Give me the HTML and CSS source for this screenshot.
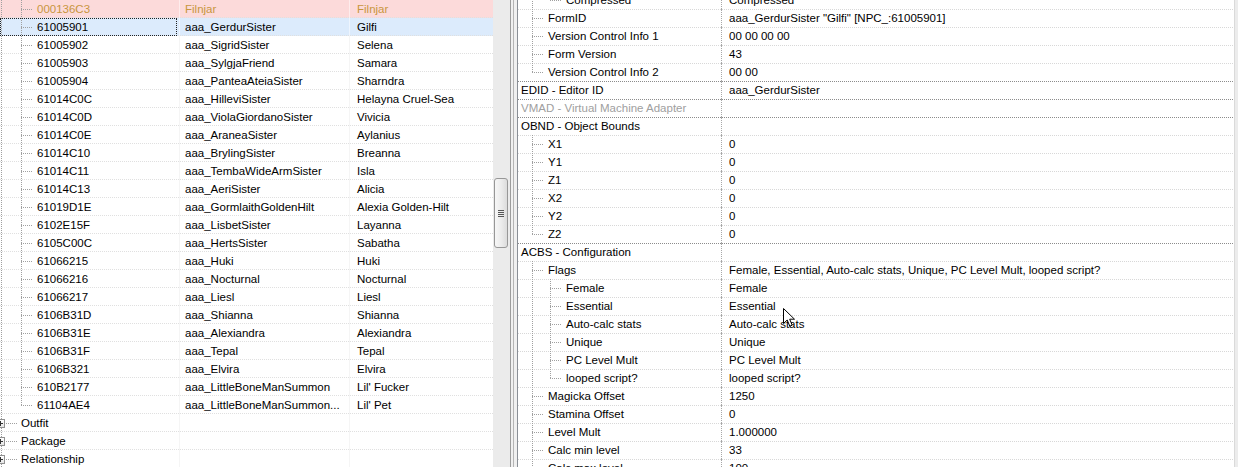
FILE: index.html
```html
<!DOCTYPE html>
<html>
  <head>
    <meta charset="UTF-8" />
    <title>Record View</title>
    <link rel="stylesheet" href="styles.css">
  </head>
  <body>
    <div class="window">
      <div class="left">
        <div class="lrow top"><div class="c1"><span class="l-root"></span><span class="l-br"></span>000136C3</div><div class="c2">Filnjar</div><div class="c3">Filnjar</div></div>
        <div class="lrow sel"><div class="c1"><span class="l-root"></span><span class="l-br"></span>61005901</div><div class="c2">aaa_GerdurSister</div><div class="c3">Gilfi</div></div>
        <div class="lrow"><div class="c1"><span class="l-root"></span><span class="l-br"></span>61005902</div><div class="c2">aaa_SigridSister</div><div class="c3">Selena</div></div>
        <div class="lrow"><div class="c1"><span class="l-root"></span><span class="l-br"></span>61005903</div><div class="c2">aaa_SylgjaFriend</div><div class="c3">Samara</div></div>
        <div class="lrow"><div class="c1"><span class="l-root"></span><span class="l-br"></span>61005904</div><div class="c2">aaa_PanteaAteiaSister</div><div class="c3">Sharndra</div></div>
        <div class="lrow"><div class="c1"><span class="l-root"></span><span class="l-br"></span>61014C0C</div><div class="c2">aaa_HilleviSister</div><div class="c3">Helayna Cruel-Sea</div></div>
        <div class="lrow"><div class="c1"><span class="l-root"></span><span class="l-br"></span>61014C0D</div><div class="c2">aaa_ViolaGiordanoSister</div><div class="c3">Vivicia</div></div>
        <div class="lrow"><div class="c1"><span class="l-root"></span><span class="l-br"></span>61014C0E</div><div class="c2">aaa_AraneaSister</div><div class="c3">Aylanius</div></div>
        <div class="lrow"><div class="c1"><span class="l-root"></span><span class="l-br"></span>61014C10</div><div class="c2">aaa_BrylingSister</div><div class="c3">Breanna</div></div>
        <div class="lrow"><div class="c1"><span class="l-root"></span><span class="l-br"></span>61014C11</div><div class="c2">aaa_TembaWideArmSister</div><div class="c3">Isla</div></div>
        <div class="lrow"><div class="c1"><span class="l-root"></span><span class="l-br"></span>61014C13</div><div class="c2">aaa_AeriSister</div><div class="c3">Alicia</div></div>
        <div class="lrow"><div class="c1"><span class="l-root"></span><span class="l-br"></span>61019D1E</div><div class="c2">aaa_GormlaithGoldenHilt</div><div class="c3">Alexia Golden-Hilt</div></div>
        <div class="lrow"><div class="c1"><span class="l-root"></span><span class="l-br"></span>6102E15F</div><div class="c2">aaa_LisbetSister</div><div class="c3">Layanna</div></div>
        <div class="lrow"><div class="c1"><span class="l-root"></span><span class="l-br"></span>6105C00C</div><div class="c2">aaa_HertsSister</div><div class="c3">Sabatha</div></div>
        <div class="lrow"><div class="c1"><span class="l-root"></span><span class="l-br"></span>61066215</div><div class="c2">aaa_Huki</div><div class="c3">Huki</div></div>
        <div class="lrow"><div class="c1"><span class="l-root"></span><span class="l-br"></span>61066216</div><div class="c2">aaa_Nocturnal</div><div class="c3">Nocturnal</div></div>
        <div class="lrow"><div class="c1"><span class="l-root"></span><span class="l-br"></span>61066217</div><div class="c2">aaa_Liesl</div><div class="c3">Liesl</div></div>
        <div class="lrow"><div class="c1"><span class="l-root"></span><span class="l-br"></span>6106B31D</div><div class="c2">aaa_Shianna</div><div class="c3">Shianna</div></div>
        <div class="lrow"><div class="c1"><span class="l-root"></span><span class="l-br"></span>6106B31E</div><div class="c2">aaa_Alexiandra</div><div class="c3">Alexiandra</div></div>
        <div class="lrow"><div class="c1"><span class="l-root"></span><span class="l-br"></span>6106B31F</div><div class="c2">aaa_Tepal</div><div class="c3">Tepal</div></div>
        <div class="lrow"><div class="c1"><span class="l-root"></span><span class="l-br"></span>6106B321</div><div class="c2">aaa_Elvira</div><div class="c3">Elvira</div></div>
        <div class="lrow"><div class="c1"><span class="l-root"></span><span class="l-br"></span>610B2177</div><div class="c2">aaa_LittleBoneManSummon</div><div class="c3">Lil' Fucker</div></div>
        <div class="lrow"><div class="c1"><span class="l-root"></span><span class="l-br last"></span>61104AE4</div><div class="c2">aaa_LittleBoneManSummon...</div><div class="c3">Lil' Pet</div></div>
        <div class="lrow"><div class="c1"><span class="l-exp"><span class="plus"></span></span>Outfit</div><div class="c2"></div><div class="c3"></div></div>
        <div class="lrow"><div class="c1"><span class="l-exp"><span class="plus"></span></span>Package</div><div class="c2"></div><div class="c3"></div></div>
        <div class="lrow"><div class="c1"><span class="l-exp"><span class="plus"></span></span>Relationship</div><div class="c2"></div><div class="c3"></div></div>
      </div>

      <div class="vscroll">
        <div class="thumb"><span class="grip"></span></div>
      </div>

      <div class="splitter"></div>

      <div class="right">
        <div class="rlist">
          <div class="rrow"><div class="rlab"><span class="r-pipe"></span><span class="r-br2 last"></span>Compressed</div><div class="rval">Compressed</div></div>
          <div class="rrow"><div class="rlab"><span class="r-br"></span>FormID</div><div class="rval">aaa_GerdurSister "Gilfi" [NPC_:61005901]</div></div>
          <div class="rrow"><div class="rlab"><span class="r-br"></span>Version Control Info 1</div><div class="rval">00 00 00 00</div></div>
          <div class="rrow"><div class="rlab"><span class="r-br"></span>Form Version</div><div class="rval">43</div></div>
          <div class="rrow"><div class="rlab"><span class="r-br last"></span>Version Control Info 2</div><div class="rval">00 00</div></div>
          <div class="rrow r0"><div class="rlab">EDID - Editor ID</div><div class="rval">aaa_GerdurSister</div></div>
          <div class="rrow r0 dim"><div class="rlab">VMAD - Virtual Machine Adapter</div><div class="rval"></div></div>
          <div class="rrow r0"><div class="rlab">OBND - Object Bounds</div><div class="rval"></div></div>
          <div class="rrow"><div class="rlab"><span class="r-br"></span>X1</div><div class="rval">0</div></div>
          <div class="rrow"><div class="rlab"><span class="r-br"></span>Y1</div><div class="rval">0</div></div>
          <div class="rrow"><div class="rlab"><span class="r-br"></span>Z1</div><div class="rval">0</div></div>
          <div class="rrow"><div class="rlab"><span class="r-br"></span>X2</div><div class="rval">0</div></div>
          <div class="rrow"><div class="rlab"><span class="r-br"></span>Y2</div><div class="rval">0</div></div>
          <div class="rrow"><div class="rlab"><span class="r-br last"></span>Z2</div><div class="rval">0</div></div>
          <div class="rrow r0"><div class="rlab">ACBS - Configuration</div><div class="rval"></div></div>
          <div class="rrow"><div class="rlab"><span class="r-br"></span>Flags</div><div class="rval">Female, Essential, Auto-calc stats, Unique, PC Level Mult, looped script?</div></div>
          <div class="rrow"><div class="rlab"><span class="r-pipe"></span><span class="r-br2"></span>Female</div><div class="rval">Female</div></div>
          <div class="rrow"><div class="rlab"><span class="r-pipe"></span><span class="r-br2"></span>Essential</div><div class="rval">Essential</div></div>
          <div class="rrow"><div class="rlab"><span class="r-pipe"></span><span class="r-br2"></span>Auto-calc stats</div><div class="rval">Auto-calc stats</div></div>
          <div class="rrow"><div class="rlab"><span class="r-pipe"></span><span class="r-br2"></span>Unique</div><div class="rval">Unique</div></div>
          <div class="rrow"><div class="rlab"><span class="r-pipe"></span><span class="r-br2"></span>PC Level Mult</div><div class="rval">PC Level Mult</div></div>
          <div class="rrow"><div class="rlab"><span class="r-pipe"></span><span class="r-br2 last"></span>looped script?</div><div class="rval">looped script?</div></div>
          <div class="rrow"><div class="rlab"><span class="r-br"></span>Magicka Offset</div><div class="rval">1250</div></div>
          <div class="rrow"><div class="rlab"><span class="r-br"></span>Stamina Offset</div><div class="rval">0</div></div>
          <div class="rrow"><div class="rlab"><span class="r-br"></span>Level Mult</div><div class="rval">1.000000</div></div>
          <div class="rrow"><div class="rlab"><span class="r-br"></span>Calc min level</div><div class="rval">33</div></div>
          <div class="rrow"><div class="rlab"><span class="r-br"></span>Calc max level</div><div class="rval">100</div></div>
        </div>
      </div>

      <div class="rstrip"></div>
    </div>

    <!-- mouse pointer over the value column -->
    <svg class="cursor" width="13" height="20" viewBox="0 0 13 20">
      <path d="M0.5 0.5 L0.5 15.5 L4.2 12 L6.8 18.2 L9.2 17.2 L6.7 11.2 L11.5 11.2 Z" fill="#fff" stroke="#000" stroke-width="1" stroke-linejoin="round" />
    </svg>
  </body>
</html>
```

FILE: styles.css
```css
* {
  box-sizing: border-box;
  margin: 0;
  padding: 0;
}

body {
  background: #fff;
  color: #000;
  font-family: "Liberation Sans", Arial, sans-serif;
  font-size: 11.5px;
  width: 1238px;
  height: 467px;
  overflow: hidden;
  position: relative;
}

.window {
  display: flex;
  height: 467px;
  overflow: hidden;
}

/* left tree */
.left {
  width: 493px;
  flex: none;
  overflow: hidden;
}

.lrow {
  display: grid;
  grid-template-columns: 179px 170px 1fr;
  height: 18px;
  line-height: 18px;
  white-space: nowrap;
  background: repeating-linear-gradient(90deg, #e0e0e0 0 1px, transparent 1px 2px) left bottom / 100% 1px no-repeat;
}

.lrow.top {
  background-color: #fcdada;
  color: #c8963e;
}

.lrow.sel {
  background-color: #dcebfc;
}

.lrow.sel .c1 {
  outline: 1px dotted #222;
  outline-offset: -1px;
  width: 177px;
}

.c1 {
  display: flex;
  overflow: hidden;
}

.c2 {
  border-left: 1px solid #f5f5f5;
  padding-left: 5px;
  overflow: hidden;
}

.c3 {
  border-left: 1px solid #f5f5f5;
  padding-left: 7px;
  overflow: hidden;
}

.lrow.top .c2,
.lrow.top .c3,
.lrow.sel .c2,
.lrow.sel .c3 {
  border-left-color: rgba(255, 255, 255, 0.5);
}

.l-root {
  flex: none;
  width: 16px;
  background: repeating-linear-gradient(180deg, #a0a0a0 0 1px, transparent 1px 2px) 1px 0 / 1px 100% no-repeat;
}

.l-br {
  flex: none;
  width: 21px;
  background:
    repeating-linear-gradient(180deg, #a0a0a0 0 1px, transparent 1px 2px) 5px 0 / 1px 100% no-repeat,
    repeating-linear-gradient(90deg, #a0a0a0 0 1px, transparent 1px 2px) 5px 9px / 11px 1px no-repeat;
}

.l-br.last {
  background:
    repeating-linear-gradient(180deg, #a0a0a0 0 1px, transparent 1px 2px) 5px 0 / 1px 10px no-repeat,
    repeating-linear-gradient(90deg, #a0a0a0 0 1px, transparent 1px 2px) 5px 9px / 11px 1px no-repeat;
}

.l-exp {
  flex: none;
  width: 21px;
  display: flex;
  align-items: center;
  background:
    repeating-linear-gradient(180deg, #a0a0a0 0 1px, transparent 1px 2px) 1px 0 / 1px 100% no-repeat,
    repeating-linear-gradient(90deg, #a0a0a0 0 1px, transparent 1px 2px) 6px 9px / 12px 1px no-repeat;
}

.plus {
  width: 9px;
  height: 9px;
  margin-left: -4px;
  border: 1px solid #919191;
  background:
    linear-gradient(#333, #333) center / 5px 1px no-repeat,
    linear-gradient(#333, #333) center / 1px 5px no-repeat,
    linear-gradient(180deg, #fff, #e6e6e6);
}

/* scrollbar + splitter */
.vscroll {
  width: 17px;
  flex: none;
  background: #ebebeb;
  padding-top: 178px;
}

.thumb {
  width: 14px;
  height: 70px;
  margin-left: 1px;
  border: 1px solid #979797;
  border-radius: 3px;
  background: linear-gradient(90deg, #f7f7f7 0%, #ececec 50%, #dcdcdc 100%);
  display: flex;
  align-items: center;
  justify-content: center;
}

.grip {
  width: 6px;
  height: 7px;
  background: repeating-linear-gradient(180deg, #555 0 1px, transparent 1px 2px);
}

.splitter {
  width: 7px;
  flex: none;
  background: linear-gradient(90deg, #9c9c9c 0 1px, #f0f0f0 1px 3px, #b4b4b4 3px 4px, #f0f0f0 4px);
}

/* right record view */
.right {
  flex: 1;
  border-left: 1px solid #8a8f96;
  overflow: hidden;
}

.rlist {
  margin-top: -9px;
}

.rrow {
  display: grid;
  grid-template-columns: 203px 1fr;
  height: 18px;
  line-height: 18px;
  white-space: nowrap;
  background: repeating-linear-gradient(90deg, #d8d8d8 0 1px, transparent 1px 2px) left top / 100% 1px no-repeat;
}

.rrow.r0 {
  background: repeating-linear-gradient(90deg, #8c8c8c 0 1px, transparent 1px 2px) left top / 100% 1px no-repeat;
}

.rrow.dim {
  color: #a0a0a0;
}

.rlab {
  display: flex;
  padding-left: 3px;
  overflow: hidden;
}

.rlab .r-pipe ~ *,
.rlab .r-br {
  margin-right: 2px;
}

.rlab > span:first-child {
  margin-left: -3px;
}

.rval {
  border-left: 1px dotted #a8a8a8;
  padding-left: 7px;
  overflow: hidden;
}

.r-pipe {
  flex: none;
  width: 28px;
  background: repeating-linear-gradient(180deg, #a0a0a0 0 1px, transparent 1px 2px) 14px 0 / 1px 100% no-repeat;
}

.r-br {
  flex: none;
  width: 28px;
  background:
    repeating-linear-gradient(180deg, #a0a0a0 0 1px, transparent 1px 2px) 14px 0 / 1px 100% no-repeat,
    repeating-linear-gradient(90deg, #a0a0a0 0 1px, transparent 1px 2px) 14px 9px / 12px 1px no-repeat;
}

.r-br.last {
  background:
    repeating-linear-gradient(180deg, #a0a0a0 0 1px, transparent 1px 2px) 14px 0 / 1px 10px no-repeat,
    repeating-linear-gradient(90deg, #a0a0a0 0 1px, transparent 1px 2px) 14px 9px / 12px 1px no-repeat;
}

.r-br2 {
  flex: none;
  width: 18px;
  background:
    repeating-linear-gradient(180deg, #a0a0a0 0 1px, transparent 1px 2px) 4px 0 / 1px 100% no-repeat,
    repeating-linear-gradient(90deg, #a0a0a0 0 1px, transparent 1px 2px) 4px 9px / 12px 1px no-repeat;
}

.r-br2.last {
  background:
    repeating-linear-gradient(180deg, #a0a0a0 0 1px, transparent 1px 2px) 4px 0 / 1px 10px no-repeat,
    repeating-linear-gradient(90deg, #a0a0a0 0 1px, transparent 1px 2px) 4px 9px / 12px 1px no-repeat;
}

.rstrip {
  width: 4px;
  flex: none;
  background: #ececec;
  border-left: 1px solid #dadada;
}

.cursor {
  position: absolute;
  left: 783px;
  top: 308px;
}
```
